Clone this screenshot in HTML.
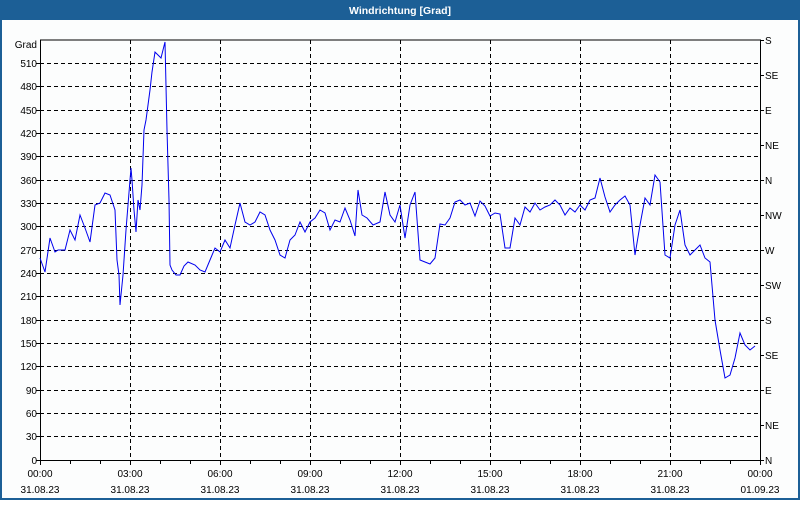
<!DOCTYPE html>
<html><head><style>
html,body{margin:0;padding:0;background:#fff;}
body{width:800px;height:500px;overflow:hidden;}
</style></head><body>
<svg width="800" height="500" xmlns="http://www.w3.org/2000/svg" font-family="Liberation Sans, sans-serif" font-size="10">
<rect x="0" y="0" width="800" height="500" fill="#1c5f96"/>
<rect x="2" y="20" width="796" height="478" fill="#fcfdfd"/>
<text x="400" y="14" fill="#fff" font-weight="bold" text-anchor="middle" font-size="10.5">Windrichtung [Grad]</text>
<g stroke="#000" stroke-width="1" stroke-dasharray="4,3" shape-rendering="crispEdges">
<line x1="40" x2="760" y1="63.5" y2="63.5"/><line x1="40" x2="760" y1="86.5" y2="86.5"/>
<line x1="40" x2="760" y1="110.5" y2="110.5"/><line x1="40" x2="760" y1="133.5" y2="133.5"/>
<line x1="40" x2="760" y1="156.5" y2="156.5"/><line x1="40" x2="760" y1="180.5" y2="180.5"/>
<line x1="40" x2="760" y1="203.5" y2="203.5"/><line x1="40" x2="760" y1="226.5" y2="226.5"/>
<line x1="40" x2="760" y1="250.5" y2="250.5"/><line x1="40" x2="760" y1="273.5" y2="273.5"/>
<line x1="40" x2="760" y1="296.5" y2="296.5"/><line x1="40" x2="760" y1="320.5" y2="320.5"/>
<line x1="40" x2="760" y1="343.5" y2="343.5"/><line x1="40" x2="760" y1="366.5" y2="366.5"/>
<line x1="40" x2="760" y1="390.5" y2="390.5"/><line x1="40" x2="760" y1="413.5" y2="413.5"/>
<line x1="40" x2="760" y1="436.5" y2="436.5"/>
<line x1="130.5" x2="130.5" y1="40" y2="460"/><line x1="220.5" x2="220.5" y1="40" y2="460"/>
<line x1="310.5" x2="310.5" y1="40" y2="460"/><line x1="400.5" x2="400.5" y1="40" y2="460"/>
<line x1="490.5" x2="490.5" y1="40" y2="460"/><line x1="580.5" x2="580.5" y1="40" y2="460"/>
<line x1="670.5" x2="670.5" y1="40" y2="460"/>
</g>
<g stroke="#000" stroke-width="1" shape-rendering="crispEdges" fill="none">
<path d="M40.5 40V460.5H760.5V40H40"/>
<path d="M36 63.5h4M36 86.5h4M36 110.5h4M36 133.5h4M36 156.5h4M36 180.5h4M36 203.5h4M36 226.5h4M36 250.5h4M36 273.5h4M36 296.5h4M36 320.5h4M36 343.5h4M36 366.5h4M36 390.5h4M36 413.5h4M36 436.5h4M36 460.5h4"/>
<path d="M760 40.5h4M760 75.5h4M760 110.5h4M760 145.5h4M760 180.5h4M760 215.5h4M760 250.5h4M760 285.5h4M760 320.5h4M760 355.5h4M760 390.5h4M760 425.5h4M760 460.5h4"/>
<path d="M40.5 460v5M70.5 460v4M100.5 460v4M130.5 460v5M160.5 460v4M190.5 460v4M220.5 460v5M250.5 460v4M280.5 460v4M310.5 460v5M340.5 460v4M370.5 460v4M400.5 460v5M430.5 460v4M460.5 460v4M490.5 460v5M520.5 460v4M550.5 460v4M580.5 460v5M610.5 460v4M640.5 460v4M670.5 460v5M700.5 460v4M730.5 460v4M760.5 460v5"/>
</g>
<g fill="#000" text-anchor="end">
<text x="37" y="48">Grad</text>
<text x="37" y="67">510</text><text x="37" y="90">480</text><text x="37" y="114">450</text><text x="37" y="137">420</text>
<text x="37" y="160">390</text><text x="37" y="184">360</text><text x="37" y="207">330</text><text x="37" y="230">300</text>
<text x="37" y="254">270</text><text x="37" y="277">240</text><text x="37" y="300">210</text><text x="37" y="324">180</text>
<text x="37" y="347">150</text><text x="37" y="370">120</text><text x="37" y="394">90</text><text x="37" y="417">60</text>
<text x="37" y="440">30</text><text x="37" y="464">0</text>
</g>
<g fill="#000">
<text x="765" y="44">S</text><text x="765" y="79">SE</text><text x="765" y="114">E</text><text x="765" y="149">NE</text>
<text x="765" y="184">N</text><text x="765" y="219">NW</text><text x="765" y="254">W</text><text x="765" y="289">SW</text>
<text x="765" y="324">S</text><text x="765" y="359">SE</text><text x="765" y="394">E</text><text x="765" y="429">NE</text>
<text x="765" y="464">N</text>
</g>
<g fill="#000" text-anchor="middle">
<text x="40" y="477">00:00</text><text x="130" y="477">03:00</text><text x="220" y="477">06:00</text><text x="310" y="477">09:00</text>
<text x="400" y="477">12:00</text><text x="490" y="477">15:00</text><text x="580" y="477">18:00</text><text x="670" y="477">21:00</text><text x="760" y="477">00:00</text>
<text x="40" y="493">31.08.23</text><text x="130" y="493">31.08.23</text><text x="220" y="493">31.08.23</text><text x="310" y="493">31.08.23</text>
<text x="400" y="493">31.08.23</text><text x="490" y="493">31.08.23</text><text x="580" y="493">31.08.23</text><text x="670" y="493">31.08.23</text><text x="760" y="493">01.09.23</text>
</g>
<polyline fill="none" stroke="#0000ee" stroke-width="1" points="40,258 45,272 50,238 55,252 58,250 65,250 70,230 75,240 80,215 85,228 90,242 95,205 100,203 105,193 110,195 115,210 117,260 119,275 120,305 123,275 126,230 128,205 130,180 131,168 132,180 134,210 136,232 138,200 140,210 142,185 144,130 146,120 150,90 152,72 155,52 158,55 161,58 165,42 167,130 169,200 170,265 172,270 176,275 180,275 184,266 188,262 195,265 200,270 205,272 210,260 215,248 220,252 225,240 230,248 235,225 240,203 245,222 250,225 255,222 260,212 265,215 270,230 275,240 280,255 285,258 290,240 295,235 300,222 305,232 310,222 315,218 320,210 325,213 330,230 335,220 340,222 345,208 350,220 355,236 358,190 362,215 367,218 373,225 380,222 385,192 390,215 395,222 400,205 405,238 410,205 415,192 420,260 425,262 430,264 435,258 440,224 445,225 450,218 455,202 460,200 465,205 470,203 475,216 480,201 485,206 490,216 495,213 500,214 505,248 510,248 515,218 520,225 525,207 530,212 535,203 540,210 545,207 550,205 555,200 560,205 565,215 570,208 575,212 580,205 585,210 590,200 595,198 600,178 605,197 610,212 615,205 620,200 625,196 630,205 635,255 640,225 645,198 650,205 655,175 660,182 665,255 670,258 675,225 680,210 685,245 690,255 695,250 700,245 705,258 710,262 715,320 720,350 725,378 730,375 735,358 740,333 745,345 750,350 755,346"/>
</svg>
</body></html>
